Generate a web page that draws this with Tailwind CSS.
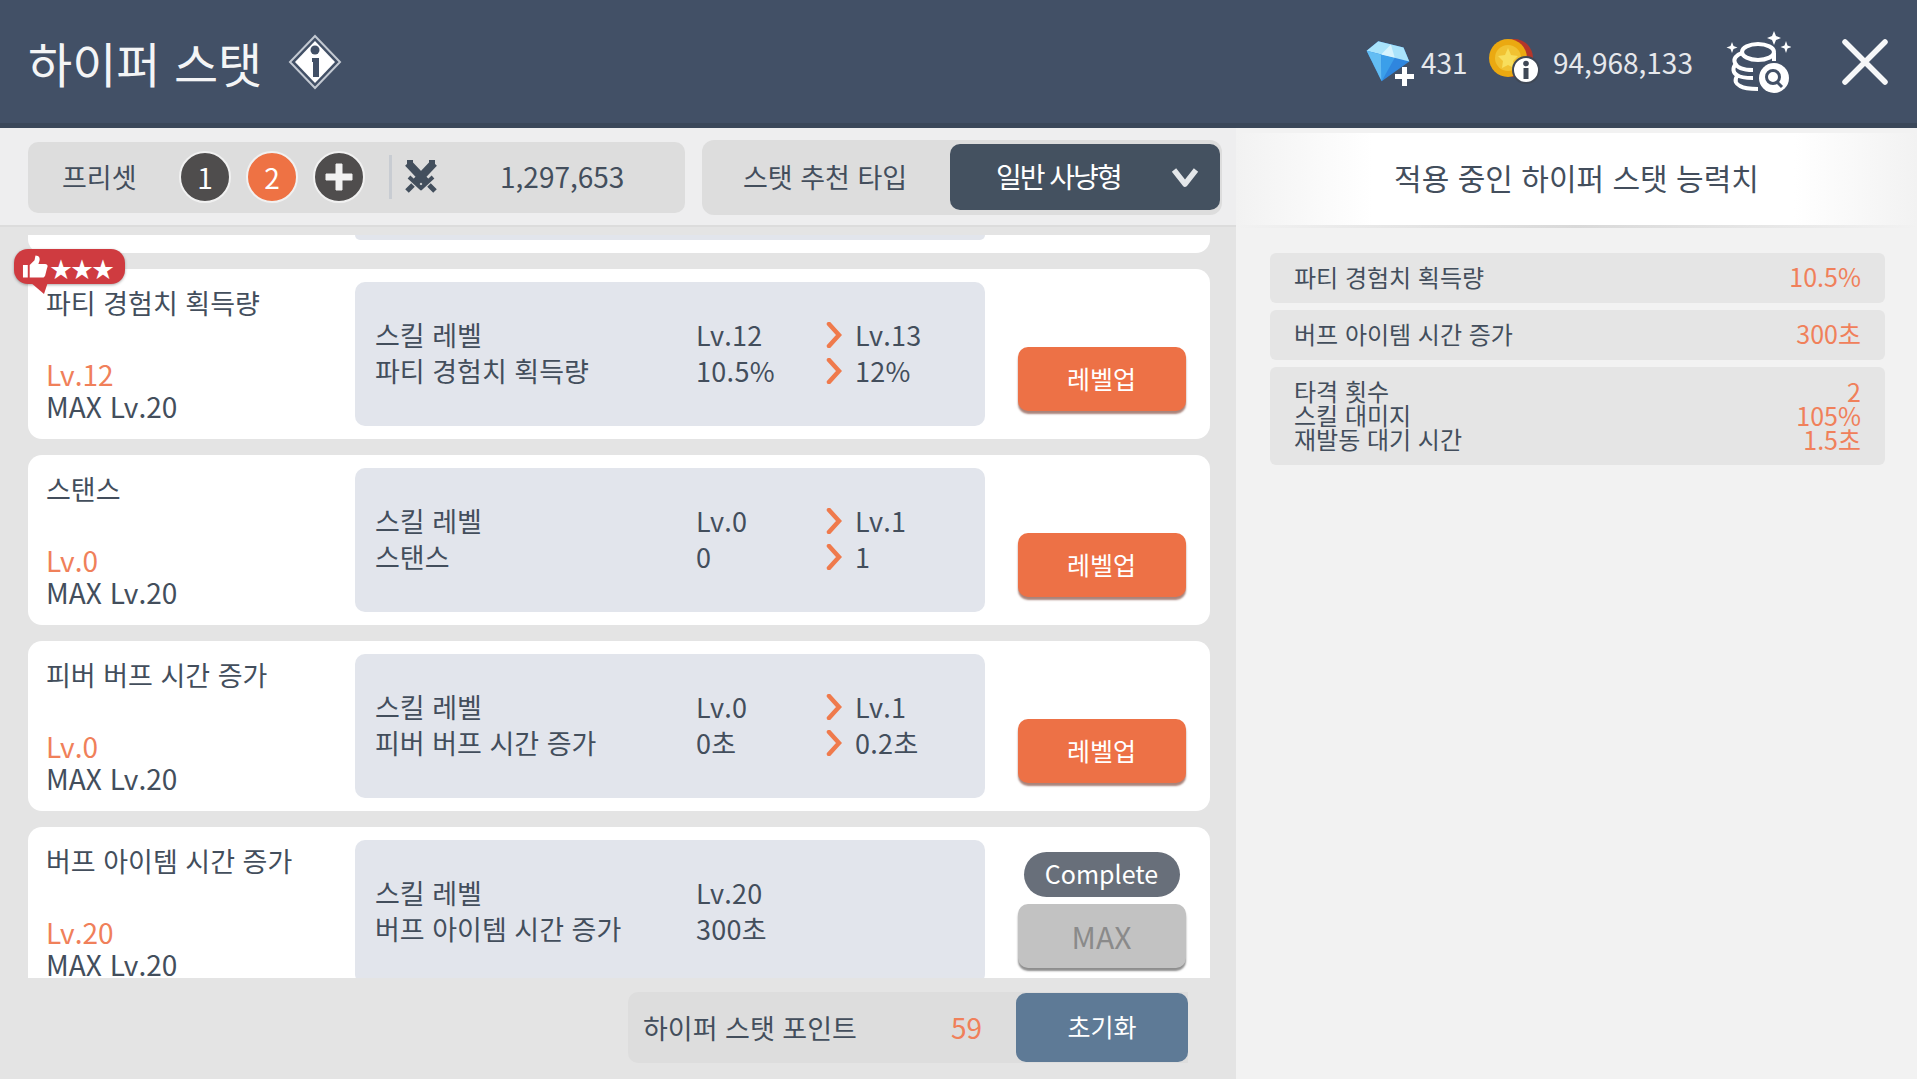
<!DOCTYPE html>
<html lang="ko"><head><meta charset="utf-8">
<script src="https://cdn.jsdelivr.net/npm/@tailwindcss/browser@4"></script>
</head>
<body class="m-0 overflow-hidden">
<div class="w-[1917px] h-[1079px] flex flex-col overflow-hidden bg-[#f2f2f2] text-[#434e5c] font-['Noto_Sans_CJK_KR','Noto_Sans',sans-serif]">
  <!-- header -->
  <header class="h-[128px] shrink-0 bg-[#425066] border-b-[5px] border-[#3a4759] flex items-center pl-[28px] text-white">
    <h1 class="text-[48px] leading-none font-normal text-[#f4f5f6]">하이퍼 스탯</h1>
    <svg class="ml-[26px]" width="54" height="56" viewBox="0 0 54 56"><path d="M27 2 L52 28 L27 54 L2 28Z" fill="none" stroke="#c3c9d2" stroke-width="2"/><path d="M27 7 L47 28 L27 49 L7 28Z" fill="#fff"/><circle cx="27" cy="16" r="4.500" fill="#425066"/><path d="M24 24h7v19h-6V28h-1z" fill="#425066"/></svg>
    <div class="ml-auto flex items-center h-full">
      <svg width="56" height="52" viewBox="0 0 56 52" class="mr-[2px]">
        <g transform="rotate(14 24 24)"><path d="M11 8h26l9 12-22 26L2 20Z" fill="#2f86de"/><path d="M11 8h26l9 12H2Z" fill="#a9e3fb"/><path d="M2 20h15l7 26Z" fill="#63bdf3"/><path d="M17 20h14l-7 26Z" fill="#3b9fea"/><path d="M17 20l7-12 7 12Z" fill="#d6f3fd"/></g>
        <path d="M39 31h5v7h7v5h-7v7h-5v-7h-7v-5h7Z" fill="#fff"/></svg>
      <span class="text-[28px] text-[#e6e8ec] leading-none w-[49px]">431</span>
      <svg width="54" height="46" viewBox="0 0 54 46" class="ml-[18px]"><circle cx="26" cy="19" r="19" fill="#b5362a"/><circle cx="20" cy="19" r="19" fill="#eba911"/><circle cx="20" cy="19" r="13" fill="#f1c232"/><path d="M20 9l3 7 7 1-5 5 1 7-6-3-6 3 1-7-5-5 7-1Z" fill="#f8de5c"/><circle cx="38" cy="31" r="13" fill="#fff" stroke="#3f4856" stroke-width="2"/><rect x="35.500" y="29" width="5" height="11" fill="#3f4856"/><circle cx="38" cy="24.500" r="2.800" fill="#3f4856"/></svg>
      <span class="ml-[11px] text-[28px] text-[#e6e8ec] leading-none w-[150px]">94,968,133</span>
      <svg width="66" height="62" viewBox="0 0 66 62" class="ml-[22px]" fill="none">
        <path d="M49 0l2 5 5 2-5 2-2 5-2-5-5-2 5-2ZM7 11l1.500 4 4 1.500-4 1.500L7 22l-1.500-4-4-1.500 4-1.500ZM61 10l1.500 4.500 4 1.500-4 1.500L61 22l-1.500-4.500-4-1.500 4-1.500Z" fill="#fff"/>
        <ellipse cx="33" cy="21" rx="16" ry="8" stroke="#fff" stroke-width="4"/>
        <path d="M17 22c-6 2-9 6-7 10 2 5 10 7 18 7M11 33c-4 4-3 9 1 11 4 3 10 3 16 3M12 45c-3 5-1 8 3 10 5 3 12 3 18 3" stroke="#fff" stroke-width="4"/>
        <path d="M49 22v8" stroke="#fff" stroke-width="4"/>
        <circle cx="49" cy="47" r="15" fill="#fff"/><circle cx="48" cy="46" r="6.500" stroke="#425066" stroke-width="3"/><path d="M52 51l5 5" stroke="#425066" stroke-width="3"/></svg>
      <svg width="46" height="46" viewBox="0 0 46 46" class="ml-[51px] mr-[29px]"><path d="M3 3L43 43M43 3L3 43" stroke="#f6f7f8" stroke-width="5.500" stroke-linecap="round"/></svg>
    </div>
  </header>
  <div class="flex flex-1 min-h-0">
    <!-- left -->
    <main class="w-[1236px] shrink-0 bg-[#e4e4e4] flex flex-col">
      <div class="h-[99px] shrink-0 bg-[#eeeeef] border-b-2 border-[#dcdcdc] flex items-center pl-[28px] gap-[17px] pt-[1px]">
        <div class="w-[657px] h-[71px] rounded-[10px] bg-[#dddddd] flex items-center">
          <span class="w-[151px] pl-[34px] text-[27px] leading-none pb-[2px]">프리셋</span>
          <span class="w-[52px] h-[52px] rounded-full bg-[#4f4d4d] border-2 border-[#f1f1f1] text-white text-[28px] flex items-center justify-center">1</span>
          <span class="w-[52px] h-[52px] rounded-full bg-[#ee7244] border-2 border-[#f1f1f1] text-white text-[28px] flex items-center justify-center ml-[15px]">2</span>
          <span class="w-[52px] h-[52px] rounded-full bg-[#4f4d4d] border-2 border-[#f1f1f1] flex items-center justify-center ml-[15px]"><svg width="32" height="32" viewBox="0 0 32 32"><path d="M13 3h6v10h10v6H19v10h-6V19H3v-6h10Z" fill="#f2f2f2" stroke="#f2f2f2" stroke-linejoin="round"/></svg></span>
          <span class="w-[3px] h-[44px] bg-[#c8ccd2] ml-[24px]"></span>
          <svg width="36" height="36" viewBox="0 0 36 36" class="ml-[11px]" fill="none" stroke="#434f5d"><path d="M5 4L23 23M31 4L13 23" stroke-width="8"/><path d="M4 1h6v6H4ZM26 1h6v6h-6Z" fill="#434f5d" stroke="none"/><path d="M17 30L30 18M19 30L6 18" stroke-width="4"/><path d="M26 26l6 6M10 26l-6 6" stroke-width="5"/></svg>
          <span class="ml-[61px] text-[28px] leading-none pb-[2px]">1,297,653</span>
        </div>
        <div class="w-[520px] h-[75px] rounded-[12px] bg-[#dddddd] flex items-center pr-[2px]">
          <span class="flex-1 text-center text-[27px] leading-none pr-[2px] pb-[2px]">스탯 추천 타입</span>
          <div class="w-[270px] h-[66px] rounded-[10px] bg-[#445160] text-white flex items-center">
            <span class="ml-[46px] text-[28px] leading-none tracking-[-2px] pb-[2px]">일반 사냥형</span>
            <svg width="28" height="20" viewBox="0 0 28 20" class="ml-auto mr-[21px]"><path d="M3 3l11 14L25 3" fill="none" stroke="#e4e7ea" stroke-width="5.500" stroke-linejoin="round"/></svg>
          </div>
        </div>
      </div>
      <div class="relative h-[743px] mt-[8px] overflow-hidden shrink-0 pl-[28px] pr-[26px]">
        <!-- partial card -->
        <div class="h-[18px] bg-white rounded-b-[14px] pl-[327px]"><div class="h-[5px] w-[630px] bg-[#e2e5ec] rounded-b-[10px]"></div></div>

        <article class="mt-[16px] h-[170px] rounded-[14px] bg-white flex">
          <div class="w-[327px] shrink-0 pl-[18px] pt-[16px]">
            <div class="text-[27px] leading-[36px] h-[73px]">파티 경험치 획득량</div>
            <div class="text-[28px] leading-[32px] text-[#f0805a]">Lv.12</div>
            <div class="text-[28px] leading-[32px]">MAX Lv.20</div>
          </div>
          <div class="w-[630px] h-[144px] mt-[13px] rounded-[10px] bg-[#e2e5ec] grid grid-cols-[321px_159px_1fr] content-start pt-[35px] pl-[20px] text-[27px] leading-[36px]">
            <span>스킬 레벨</span><span class="flex items-center justify-between pr-[13px] tracking-[0.3px]">Lv.12<svg width="16" height="26" viewBox="0 0 16 26"><path d="M3 2l10 11L3 24" fill="none" stroke="#ef7a4c" stroke-width="4.500" stroke-linecap="round"/></svg></span><span class="tracking-[0.3px]">Lv.13</span>
            <span>파티 경험치 획득량</span><span class="flex items-center justify-between pr-[13px] tracking-[0.3px]">10.5%<svg width="16" height="26" viewBox="0 0 16 26"><path d="M3 2l10 11L3 24" fill="none" stroke="#ef7a4c" stroke-width="4.500" stroke-linecap="round"/></svg></span><span class="tracking-[0.3px]">12%</span>
          </div>
          <div class="flex-1 flex flex-col items-center justify-end pb-[28px] pl-[8px]">
            <button class="w-[168px] h-[64px] rounded-[10px] bg-[#ed7146] shadow-[0_3px_2px_#a9837a] text-white text-[25px]">레벨업</button>
          </div>
        </article>

        <article class="mt-[16px] h-[170px] rounded-[14px] bg-white flex">
          <div class="w-[327px] shrink-0 pl-[18px] pt-[16px]">
            <div class="text-[27px] leading-[36px] h-[73px]">스탠스</div>
            <div class="text-[28px] leading-[32px] text-[#f0805a]">Lv.0</div>
            <div class="text-[28px] leading-[32px]">MAX Lv.20</div>
          </div>
          <div class="w-[630px] h-[144px] mt-[13px] rounded-[10px] bg-[#e2e5ec] grid grid-cols-[321px_159px_1fr] content-start pt-[35px] pl-[20px] text-[27px] leading-[36px]">
            <span>스킬 레벨</span><span class="flex items-center justify-between pr-[13px] tracking-[0.3px]">Lv.0<svg width="16" height="26" viewBox="0 0 16 26"><path d="M3 2l10 11L3 24" fill="none" stroke="#ef7a4c" stroke-width="4.500" stroke-linecap="round"/></svg></span><span class="tracking-[0.3px]">Lv.1</span>
            <span>스탠스</span><span class="flex items-center justify-between pr-[13px] tracking-[0.3px]">0<svg width="16" height="26" viewBox="0 0 16 26"><path d="M3 2l10 11L3 24" fill="none" stroke="#ef7a4c" stroke-width="4.500" stroke-linecap="round"/></svg></span><span class="tracking-[0.3px]">1</span>
          </div>
          <div class="flex-1 flex flex-col items-center justify-end pb-[28px] pl-[8px]">
            <button class="w-[168px] h-[64px] rounded-[10px] bg-[#ed7146] shadow-[0_3px_2px_#a9837a] text-white text-[25px]">레벨업</button>
          </div>
        </article>

        <article class="mt-[16px] h-[170px] rounded-[14px] bg-white flex">
          <div class="w-[327px] shrink-0 pl-[18px] pt-[16px]">
            <div class="text-[27px] leading-[36px] h-[73px]">피버 버프 시간 증가</div>
            <div class="text-[28px] leading-[32px] text-[#f0805a]">Lv.0</div>
            <div class="text-[28px] leading-[32px]">MAX Lv.20</div>
          </div>
          <div class="w-[630px] h-[144px] mt-[13px] rounded-[10px] bg-[#e2e5ec] grid grid-cols-[321px_159px_1fr] content-start pt-[35px] pl-[20px] text-[27px] leading-[36px]">
            <span>스킬 레벨</span><span class="flex items-center justify-between pr-[13px] tracking-[0.3px]">Lv.0<svg width="16" height="26" viewBox="0 0 16 26"><path d="M3 2l10 11L3 24" fill="none" stroke="#ef7a4c" stroke-width="4.500" stroke-linecap="round"/></svg></span><span class="tracking-[0.3px]">Lv.1</span>
            <span>피버 버프 시간 증가</span><span class="flex items-center justify-between pr-[13px] tracking-[0.3px]">0초<svg width="16" height="26" viewBox="0 0 16 26"><path d="M3 2l10 11L3 24" fill="none" stroke="#ef7a4c" stroke-width="4.500" stroke-linecap="round"/></svg></span><span class="tracking-[0.3px]">0.2초</span>
          </div>
          <div class="flex-1 flex flex-col items-center justify-end pb-[28px] pl-[8px]">
            <button class="w-[168px] h-[64px] rounded-[10px] bg-[#ed7146] shadow-[0_3px_2px_#a9837a] text-white text-[25px]">레벨업</button>
          </div>
        </article>

        <article class="mt-[16px] h-[170px] rounded-[14px] bg-white flex">
          <div class="w-[327px] shrink-0 pl-[18px] pt-[16px]">
            <div class="text-[27px] leading-[36px] h-[73px]">버프 아이템 시간 증가</div>
            <div class="text-[28px] leading-[32px] text-[#f0805a]">Lv.20</div>
            <div class="text-[28px] leading-[32px]">MAX Lv.20</div>
          </div>
          <div class="w-[630px] h-[144px] mt-[13px] rounded-[10px] bg-[#e2e5ec] grid grid-cols-[321px_1fr] content-start pt-[35px] pl-[20px] text-[27px] leading-[36px]">
            <span>스킬 레벨</span><span class="tracking-[0.3px]">Lv.20</span>
            <span>버프 아이템 시간 증가</span><span class="tracking-[0.3px]">300초</span>
          </div>
          <div class="flex-1 flex flex-col items-center pt-[25px] pl-[8px]">
            <span class="w-[156px] h-[45px] rounded-full bg-[#686f7a] text-white text-[25px] leading-none flex items-center justify-center pb-[2px]">Complete</span>
            <button class="mt-[7px] w-[168px] h-[64px] rounded-[10px] bg-[#c2c2c2] shadow-[0_3px_2px_#8e8e8e] text-[#8a8a8a] text-[30px]">MAX</button>
          </div>
        </article>

        <!-- recommendation badge -->
        <div class="absolute left-[14px] top-[14px] w-[111px] h-[35px] rounded-[14px] bg-[#cf3b40] shadow-[0_1px_3px_#0005] flex items-center gap-[2px] pl-[8px] text-white text-[22px] leading-none">
          <svg width="26" height="24" viewBox="0 0 27 24"><path d="M1 10h5v13H1ZM8 10l5-5 1-5c4 0 5 3 4 6l-1 3h7c3 0 3 3 2 4l-2 8c-1 2-2 2-4 2H8Z" fill="#fff"/></svg>
          <span class="tracking-[-1px]">★★★</span>
          <svg class="absolute left-[16px] top-[33px]" width="18" height="12" viewBox="0 0 18 12"><path d="M0 0h18L14 12Z" fill="#cf3b40"/></svg>
        </div>
      </div>
      <div class="flex-1 flex items-center justify-end pr-[48px] pb-[3px]">
        <div class="w-[560px] h-[71px] rounded-l-[10px] bg-[#dddddd] flex items-center pl-[15px] pr-[206px] relative">
          <span class="text-[27px] leading-none">하이퍼 스탯 포인트</span>
          <span class="ml-auto text-[28px] leading-none text-[#f0805a]">59</span>
          <button class="absolute right-0 top-[1px] w-[172px] h-[69px] rounded-[10px] bg-[#5e7a96] text-white text-[25px]">초기화</button>
        </div>
      </div>
    </main>
    <!-- right -->
    <aside class="flex-1 min-w-0 flex flex-col">
      <div class="h-[92px] mt-[5px] shrink-0 bg-[linear-gradient(90deg,#f2f2f2,#ffffff_20%,#ffffff_82%,#f2f2f2)] flex items-center justify-center text-[30px] leading-none pb-[5px]">적용 중인 하이퍼 스탯 능력치</div>
      <div class="h-[3px] shrink-0 bg-[linear-gradient(90deg,#f2f2f2,#d9d9d9_50%,#f2f2f2)]"></div>
      <div class="mt-[25px] mx-[34px] w-[615px] flex flex-col gap-[7px] text-[24px]">
        <div class="h-[50px] rounded-[6px] bg-[#e5e5e5] flex items-center justify-between px-[24px] pb-[2px]"><span>파티 경험치 획득량</span><span class="text-[25px] text-[#f0805a]">10.5%</span></div>
        <div class="h-[50px] rounded-[6px] bg-[#e5e5e5] flex items-center justify-between px-[24px] pb-[2px]"><span>버프 아이템 시간 증가</span><span class="text-[25px] text-[#f0805a]">300초</span></div>
        <div class="h-[98px] rounded-[6px] bg-[#e5e5e5] flex items-center justify-between px-[24px] leading-[24px] pb-[2px]"><div class="flex flex-col"><span>타격 횟수</span><span>스킬 대미지</span><span>재발동 대기 시간</span></div><div class="flex flex-col items-end text-[25px] text-[#f0805a]"><span>2</span><span>105%</span><span>1.5초</span></div></div>
      </div>
    </aside>
  </div>
</div>
</body></html>
